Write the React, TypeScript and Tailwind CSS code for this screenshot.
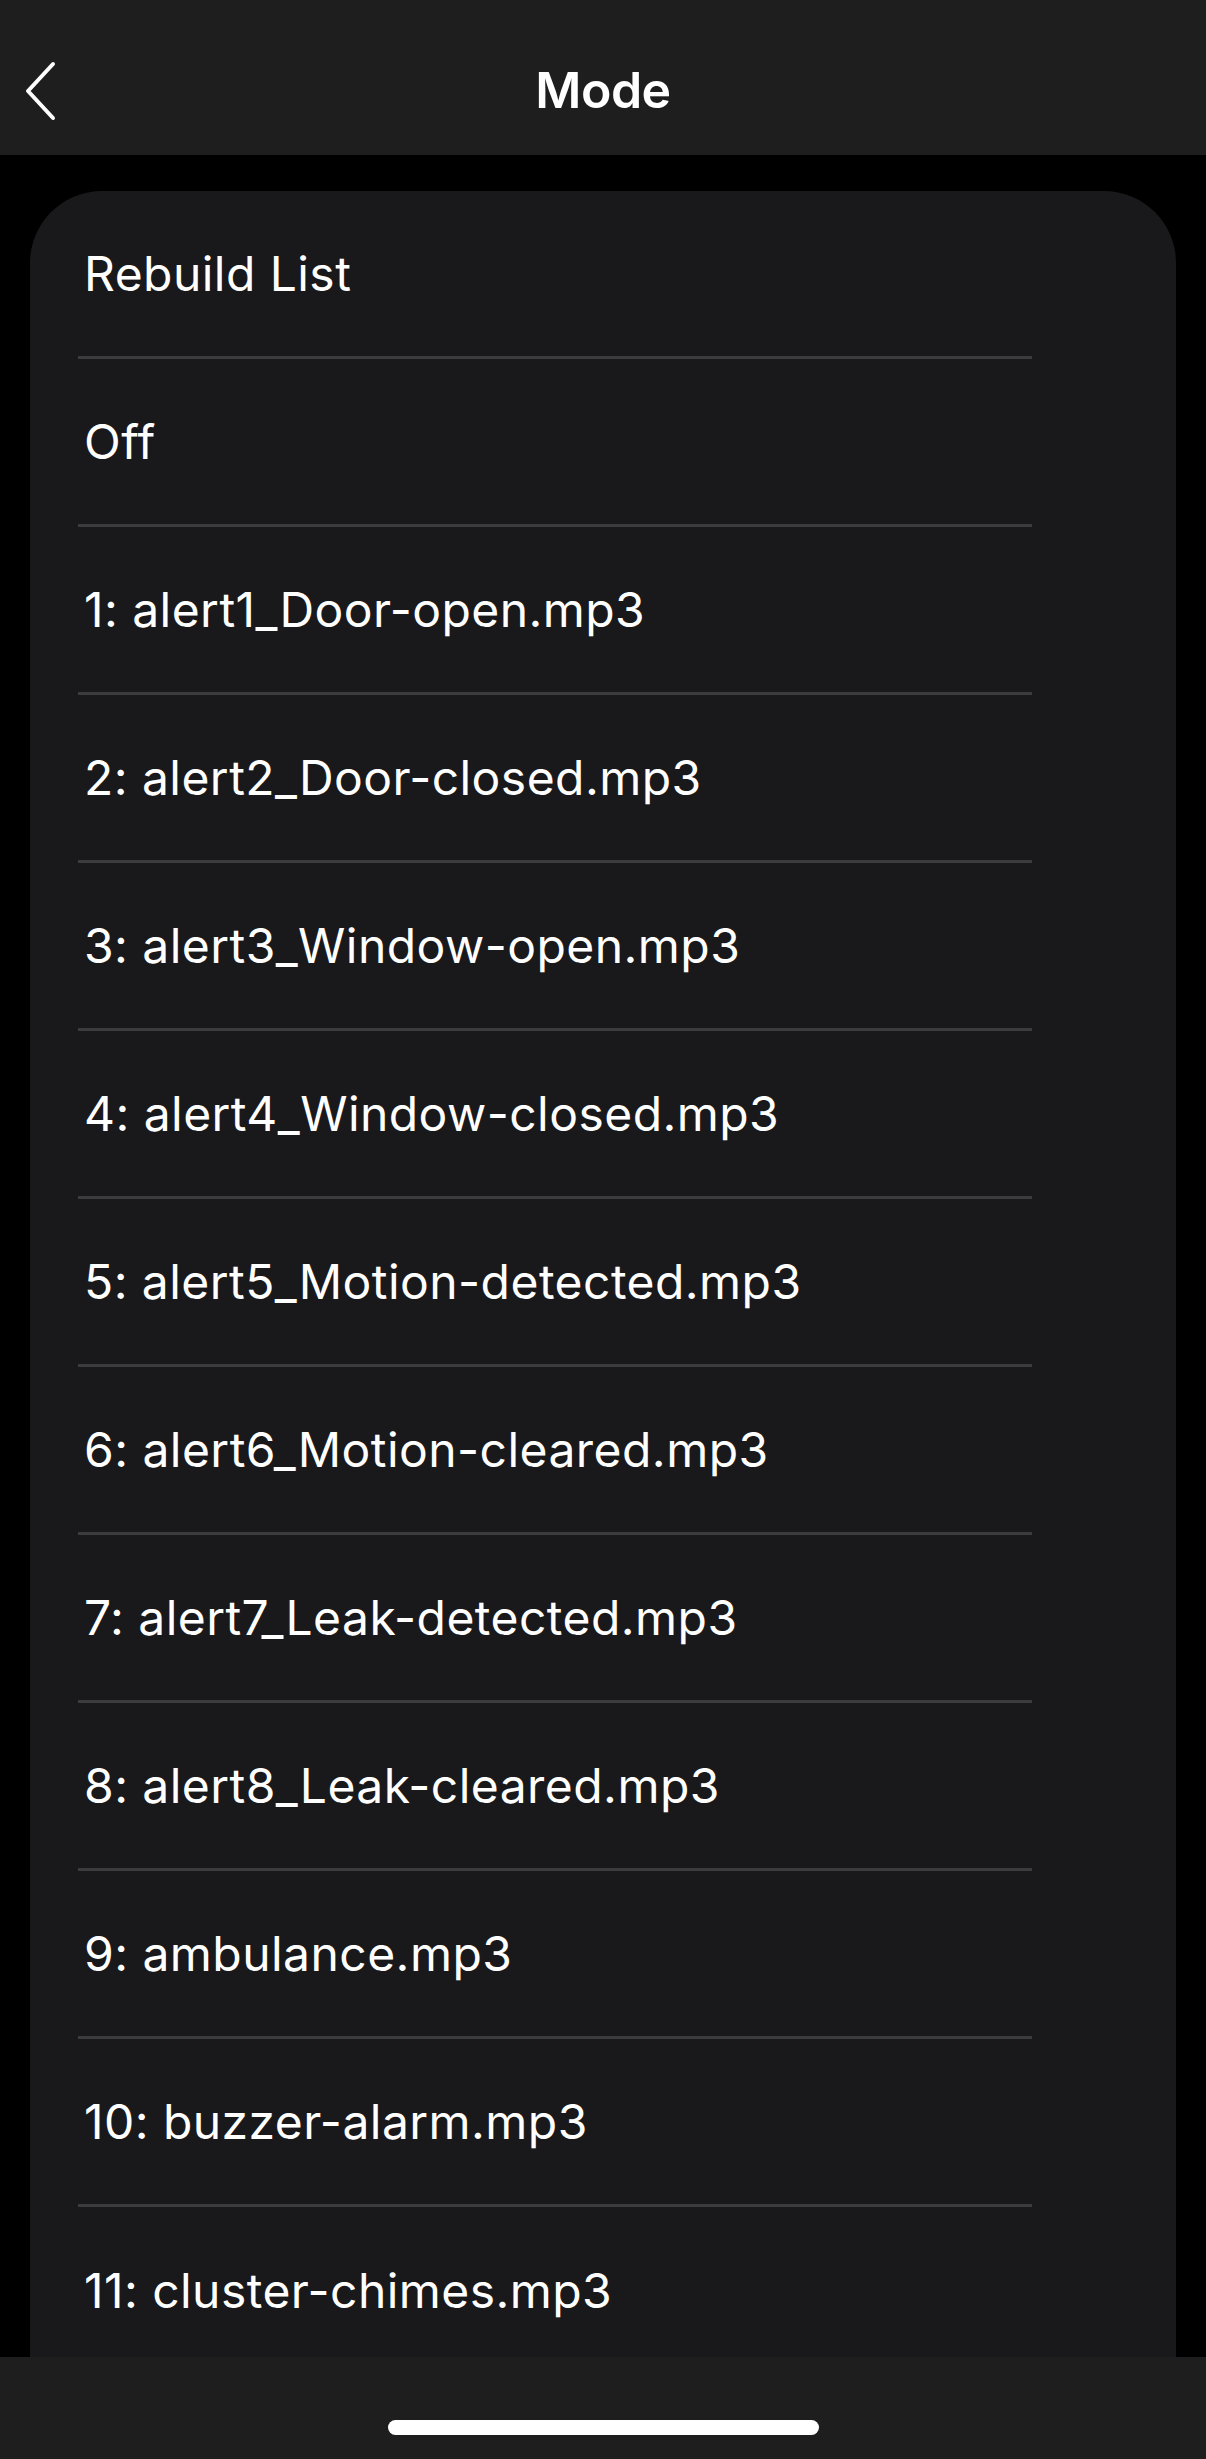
import React from 'react';

const items = [
  'Rebuild List',
  'Off',
  '1: alert1_Door-open.mp3',
  '2: alert2_Door-closed.mp3',
  '3: alert3_Window-open.mp3',
  '4: alert4_Window-closed.mp3',
  '5: alert5_Motion-detected.mp3',
  '6: alert6_Motion-cleared.mp3',
  '7: alert7_Leak-detected.mp3',
  '8: alert8_Leak-cleared.mp3',
  '9: ambulance.mp3',
  '10: buzzer-alarm.mp3',
  '11: cluster-chimes.mp3',
];

export default function App() {
  return (
    <div
      className="flex flex-col h-[2459px] w-[1206px] bg-black text-white overflow-hidden"
      style={{ fontFamily: 'Inter, "Noto Sans", sans-serif' }}
    >
      {/* top nav */}
      <div className="relative flex items-center justify-center h-[155px] pt-[24px] shrink-0 bg-[#1e1e1e]">
        <button className="absolute left-[20px] top-[56px] p-1">
          <svg width="36" height="62" viewBox="0 0 36 62" fill="none">
            <path
              d="M29 4 L4 31 L29 58"
              stroke="white"
              strokeWidth="4"
              strokeLinecap="round"
              strokeLinejoin="round"
            />
          </svg>
        </button>
        <h1 className="text-[50px] font-semibold tracking-[-0.5px] leading-none">Mode</h1>
      </div>

      {/* list */}
      <div className="flex-1 overflow-hidden pt-[36px] px-[30px]">
        <div className="bg-[#19191b] rounded-t-[72px]">
          {items.map((label, i) => (
            <div
              key={label}
              className={
                'ml-[48px] mr-[144px] h-[168px] flex items-center ' +
                (i < items.length - 1 ? 'border-b-[3px] border-[#3c3c3e]' : '')
              }
            >
              <span className="pl-[6px] text-[48px] tracking-[0.45px] leading-none">{label}</span>
            </div>
          ))}
        </div>
      </div>

      {/* home indicator bar */}
      <div className="h-[102px] shrink-0 bg-[#1e1e1e] flex justify-center">
        <div className="mt-[63px] h-[15px] w-[431px] rounded-full bg-white" />
      </div>
    </div>
  );
}
